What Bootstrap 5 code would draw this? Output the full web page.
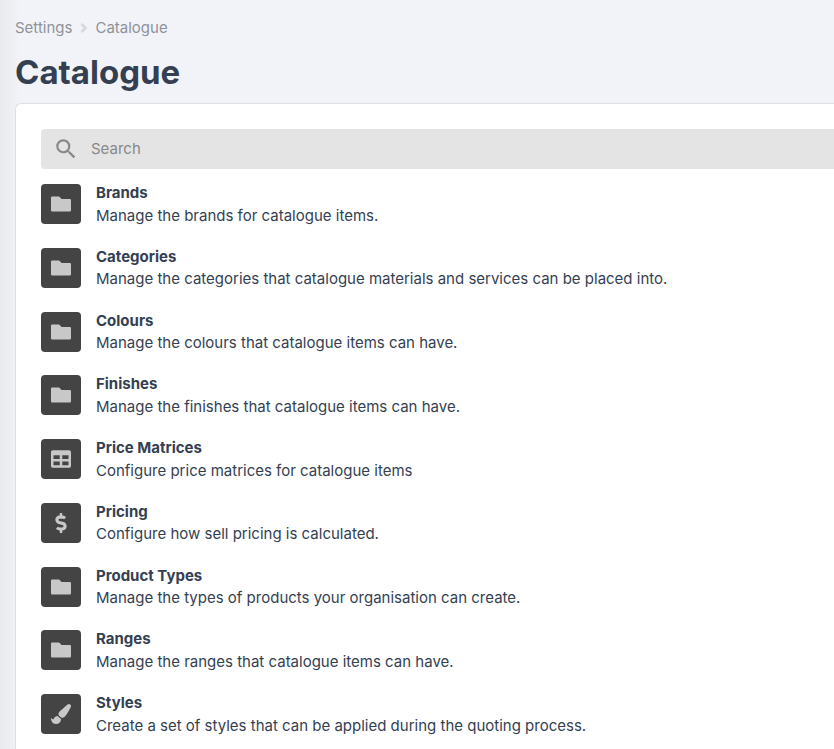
<!DOCTYPE html>
<html lang="en">
<head>
<meta charset="utf-8">
<meta name="viewport" content="width=device-width, initial-scale=1">
<title>Catalogue</title>
<link href="https://cdn.jsdelivr.net/npm/bootstrap@5.3.0/dist/css/bootstrap.min.css" rel="stylesheet">
<style>
  html { font-size: 15px; }
  body { font-family: Inter, sans-serif; color: #343f52; background: linear-gradient(to right, #e9eaec 0, #f2f3f8 20px) #f2f3f8; overflow-x: hidden; }
  .page { padding: 16px 0 0 15px; }
  .crumbs { --bs-breadcrumb-item-padding-x: 0; gap: 8px; line-height: 24px; margin-bottom: 8px; }
  .crumbs, .crumbs a { color: #8e9299; }
  .crumbs svg { width: 7px; height: 10px; }
  .page-title { font-size: 33px; line-height: 48px; font-weight: 700; margin-bottom: 7px; color: #343f52; }
  .panel { border: 1px solid #dedfe1; border-right: 0; border-radius: 6px 0 0 0; padding: 25px 0 25px 25px; min-height: calc(100vh - 103px); }
  .search-bar { background: #e4e4e4; border-radius: 4px 0 0 4px; height: 40px; padding-left: 12px; gap: 12px; margin-bottom: 13px; color: #888; }
  .search-bar input { color: #444; padding: 0; }
  .search-bar input::placeholder { color: #888; opacity: 1; }
  .settings-list { gap: 1.25rem; }
  .settings-list a { gap: 15px; color: #343f52; }
  .tile { width: 40px; height: 40px; margin-top: 2px; border-radius: 4px; background: #444; color: #c8c8c8; }
  .tile svg { width: 20px; height: 20px; fill: currentColor; }
</style>
</head>
<body>
<svg class="d-none" aria-hidden="true">
  <symbol id="folder" viewBox="0 0 512 512"><path d="M480 128H272l-64-64H32C14 64 0 78 0 96v320c0 18 14 32 32 32h448c18 0 32-14 32-32V160c0-18-14-32-32-32z"/></symbol>
  <symbol id="grid" viewBox="0 0 512 512"><path d="M464 32H48C21.49 32 0 53.49 0 80v352c0 26.51 21.49 48 48 48h416c26.51 0 48-21.49 48-48V80c0-26.51-21.49-48-48-48zM224 416H64v-96h160v96zm0-160H64v-96h160v96zm224 160H288v-96h160v96zm0-160H288v-96h160v96z"/></symbol>
  <symbol id="dollar" viewBox="0 0 288 512"><path d="M209.2 233.4l-108-31.6C88.7 198.2 80 186.5 80 173.5c0-16.3 13.2-29.5 29.5-29.5h66.3c12.2 0 24.2 3.7 34.2 10.5 6.1 4.1 14.3 3.1 19.5-2l34.8-34c7.1-6.9 6.1-18.4-1.8-24.5C238 74.8 207.4 64.1 176 64V16c0-8.8-7.2-16-16-16h-32c-8.8 0-16 7.2-16 16v48h-2.5C45.8 64-5.4 118.7.5 183.6c4.2 46.1 39.4 83.6 83.8 96.6l102.5 30c12.5 3.7 21.2 15.3 21.2 28.3 0 16.3-13.2 29.5-29.5 29.5h-66.3C100 368 88 364.3 78 357.5c-6.1-4.1-14.3-3.1-19.5 2l-34.8 34c-7.1 6.9-6.1 18.4 1.8 24.5 24.5 19.2 55.1 29.9 86.5 30v48c0 8.8 7.2 16 16 16h32c8.8 0 16-7.2 16-16v-48.2c46.6-.9 90.3-28.6 105.7-72.7 21.5-61.6-14.6-124.8-72.5-141.7z"/></symbol>
  <symbol id="brush" viewBox="0 0 512 512"><path d="M167.02 309.34c-40.12 2.58-76.53 17.86-97.19 72.3-2.35 6.21-8 9.98-14.59 9.98-11.11 0-45.46-27.67-55.25-34.35C0 439.62 37.93 512 128 512c75.86 0 128-43.77 128-120.19 0-3.11-.65-6.08-.97-9.13l-88.01-73.34zM457.89 0c-15.16 0-29.37 6.71-40.21 16.45C213.27 199.05 192 203.34 192 257.09c0 13.7 3.25 26.76 8.73 38.7l63.82 53.18c7.21 1.8 14.64 3.03 22.39 3.03 62.11 0 98.11-45.47 211.16-256.46 7.38-14.35 13.9-29.85 13.9-45.99C512 20.64 486 0 457.89 0z"/></symbol>
</svg>
<div class="page">
  <nav aria-label="Breadcrumb">
    <ol class="breadcrumb crumbs align-items-center">
      <li><a class="text-decoration-none" href="#">Settings</a></li>
      <li class="d-flex" aria-hidden="true"><svg viewBox="0 0 7 10" fill="none" stroke="#d6d8dc" stroke-width="2.5"><path d="M1.500 1L5.500 5l-4 4"/></svg></li>
      <li aria-current="page">Catalogue</li>
    </ol>
  </nav>
  <h1 class="page-title">Catalogue</h1>
  <main class="panel bg-white">
    <div class="search-bar d-flex align-items-center">
      <svg class="flex-shrink-0" width="26" height="26" viewBox="0 0 24 24" fill="currentColor" aria-hidden="true"><path d="M15.5 14h-.79l-.28-.27A6.471 6.471 0 0 0 16 9.5 6.5 6.5 0 1 0 9.5 16c1.61 0 3.09-.59 4.23-1.57l.27.28v.79l5 4.99L20.49 19l-4.99-5zm-6 0C7.01 14 5 11.99 5 9.5S7.01 5 9.5 5 14 7.01 14 9.5 11.99 14 9.5 14z"/></svg>
      <input class="form-control border-0 bg-transparent shadow-none" type="search" placeholder="Search" aria-label="Search">
    </div>
    <ul class="settings-list list-unstyled d-flex flex-column mb-0">
      <li><a class="d-flex text-decoration-none" href="#"><span class="tile d-flex flex-shrink-0 align-items-center justify-content-center"><svg><use href="#folder"/></svg></span><span><strong class="d-block">Brands</strong>Manage the brands for catalogue items.</span></a></li>
      <li><a class="d-flex text-decoration-none" href="#"><span class="tile d-flex flex-shrink-0 align-items-center justify-content-center"><svg><use href="#folder"/></svg></span><span><strong class="d-block">Categories</strong>Manage the categories that catalogue materials and services can be placed into.</span></a></li>
      <li><a class="d-flex text-decoration-none" href="#"><span class="tile d-flex flex-shrink-0 align-items-center justify-content-center"><svg><use href="#folder"/></svg></span><span><strong class="d-block">Colours</strong>Manage the colours that catalogue items can have.</span></a></li>
      <li><a class="d-flex text-decoration-none" href="#"><span class="tile d-flex flex-shrink-0 align-items-center justify-content-center"><svg><use href="#folder"/></svg></span><span><strong class="d-block">Finishes</strong>Manage the finishes that catalogue items can have.</span></a></li>
      <li><a class="d-flex text-decoration-none" href="#"><span class="tile d-flex flex-shrink-0 align-items-center justify-content-center"><svg><use href="#grid"/></svg></span><span><strong class="d-block">Price Matrices</strong>Configure price matrices for catalogue items</span></a></li>
      <li><a class="d-flex text-decoration-none" href="#"><span class="tile d-flex flex-shrink-0 align-items-center justify-content-center"><svg><use href="#dollar"/></svg></span><span><strong class="d-block">Pricing</strong>Configure how sell pricing is calculated.</span></a></li>
      <li><a class="d-flex text-decoration-none" href="#"><span class="tile d-flex flex-shrink-0 align-items-center justify-content-center"><svg><use href="#folder"/></svg></span><span><strong class="d-block">Product Types</strong>Manage the types of products your organisation can create.</span></a></li>
      <li><a class="d-flex text-decoration-none" href="#"><span class="tile d-flex flex-shrink-0 align-items-center justify-content-center"><svg><use href="#folder"/></svg></span><span><strong class="d-block">Ranges</strong>Manage the ranges that catalogue items can have.</span></a></li>
      <li><a class="d-flex text-decoration-none" href="#"><span class="tile d-flex flex-shrink-0 align-items-center justify-content-center"><svg><use href="#brush"/></svg></span><span><strong class="d-block">Styles</strong>Create a set of styles that can be applied during the quoting process.</span></a></li>
    </ul>
  </main>
</div>
<script src="https://cdn.jsdelivr.net/npm/bootstrap@5.3.0/dist/js/bootstrap.bundle.min.js"></script>
</body>
</html>
